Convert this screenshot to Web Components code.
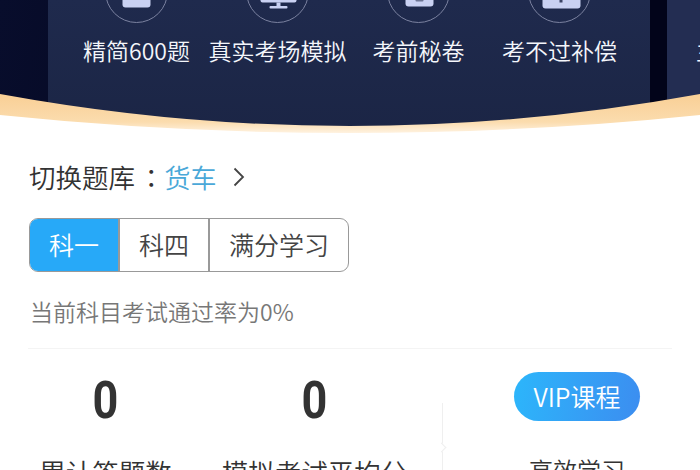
<!DOCTYPE html>
<html lang="zh">
<head>
<meta charset="UTF-8">
<title>VIP</title>
<style>
    html, body { margin: 0; padding: 0; background: #fff; }
    body { width: 700px; height: 470px; overflow: hidden; font-family: "Noto Sans CJK SC", "Noto Sans", sans-serif; font-weight: 350; }
    .perk-icon { display: block; }
</style>
<script>
    const define = (tag, html) => customElements.define(tag, class extends HTMLElement {
        constructor() {
            super();
            this.attachShadow({ mode: 'open' }).innerHTML = html;
        }
    });

    define('vip-banner', `
        <style>
            :host { display: block; position: relative; height: 134px; background: linear-gradient(100deg, #080d2c, #02041a 50%); overflow: hidden; }
            .card { position: absolute; top: 0; left: 48px; width: 602px; height: 134px; background: linear-gradient(#1f2a4d, #1b2545); }
            .next { position: absolute; top: 0; left: 667px; width: 40px; height: 134px; background: #232d52; overflow: hidden; }
            .next span { position: absolute; left: 29px; top: 35px; color: #f4f6fb; font-size: 23px; line-height: 30px; }
            .row { display: flex; padding-left: 18px; }
            svg { position: absolute; left: 0; top: 0; }
        </style>
        <div class="card"><div class="row"><slot></slot></div></div>
        <div class="next"><span>主</span></div>
        <svg width="700" height="134" viewBox="0 0 700 134">
            <defs>
                <linearGradient id="band" x1="0" y1="0" x2="0" y2="1">
                    <stop offset="0" stop-color="#f9cf95"/>
                    <stop offset="0.7" stop-color="#fbdcae"/>
                    <stop offset="1" stop-color="#fff4e4"/>
                </linearGradient>
            </defs>
            <path d="M0 94 Q350 158 700 94 V134 H0Z" fill="url(#band)"/>
            <path d="M0 115 Q350 151 700 115 V134 H0Z" fill="#fff"/>
        </svg>
    `);

    define('vip-perk', `
        <style>
            :host { display: flex; flex-direction: column; align-items: center; width: 141px; height: 70px; color: #f4f6fb; font-size: 23px; }
            .ring { width: 63px; height: 63px; margin-top: -40px; border: 1.5px solid #7b82a0; border-radius: 50%; flex: none; box-sizing: border-box; display: flex; align-items: center; justify-content: center; }
            .label { margin-top: 12px; line-height: 30px; white-space: nowrap; }
        </style>
        <div class="ring"><slot name="icon"></slot></div>
        <div class="label"><slot></slot></div>
    `);

    define('bank-switch', `
        <style>
            :host { display: flex; align-items: center; height: 34px; font-size: 26.5px; color: #333; }
            span, b { margin-top: -4px; }
            .colon { font-family: "Noto Sans CJK TC", sans-serif; margin-left: 3px; margin-right: 0; }
            b { font-weight: inherit; color: #4aa8d8; font-size: 26px; }
            svg { margin-left: 16px; margin-top: -2px; }
        </style>
        <span style="margin-left:-1px">切换题库</span><span class="colon" lang="zh-Hant">：</span><b><slot></slot></b>
        <svg width="12" height="20" viewBox="0 0 12 20"><path d="M1.5 1.5l8.5 8.5-8.5 8.5" fill="none" stroke="#444" stroke-width="1.8"/></svg>
    `);

    define('subject-tabs', `
        <style>
            :host { display: inline-flex; height: 54px; box-sizing: border-box; border: 1px solid #999; border-radius: 9px; overflow: hidden; margin-left: -1px; }
        </style>
        <slot></slot>
    `);

    define('subject-tab', `
        <style>
            :host { display: flex; align-items: center; padding: 0 19px 3px; font-size: 25px; color: #444; border-left: 2px solid #999; }
            :host(:first-child) { border-left: 0; background: #27a9f8; color: #fff; }
            :host(:last-child) { padding: 0 19px 3px 19px; }
        </style>
        <slot></slot>
    `);

    define('stat-item', `
        <style>
            :host { display: flex; flex-direction: column; align-items: center; width: 209px; color: #333; position: relative; left: 1px; }
            .num { font: 700 45px/60px "Roboto", sans-serif; margin-top: 22px; transform: scaleY(1.14); }
            .cap { font-size: 26.5px; line-height: 36px; margin-top: 23px; white-space: nowrap; }
        </style>
        <div class="num"><slot name="num"></slot></div>
        <div class="cap"><slot></slot></div>
    `);

    define('vip-course', `
        <style>
            :host { display: flex; flex-direction: column; align-items: center; width: 126px; color: #333; }
            .pill { width: 126px; height: 49px; margin-top: 23px; border-radius: 25px; background: linear-gradient(100deg, #2cb6fb, #3c8df0); color: #fff; font-size: 25px; padding-bottom: 2px; box-sizing: border-box; display: flex; align-items: center; justify-content: center; }
            .cap { font-size: 24px; line-height: 36px; margin-top: 31px; white-space: nowrap; }
        </style>
        <div class="pill">VIP课程</div>
        <div class="cap"><slot></slot></div>
    `);

    define('stats-row', `
        <style>
            :host { display: flex; position: relative; height: 140px; overflow: hidden; }
            .left { display: flex; width: 442px; flex: none; }
            .sep { width: 1px; height: 90px; margin-top: 54px; background: #efefef; margin-right: 71px; flex: none; }
            .dent { position: absolute; left: 438px; top: 95px; width: 6px; height: 6px; border: solid #efefef; border-width: 1px 1px 0 0; transform: rotate(45deg); background: #fff; }
        </style>
        <div class="left"><slot name="stats"></slot></div>
        <div class="sep"></div>
        <slot name="course"></slot>
        <i class="dent"></i>
    `);
</script>
</head>
<body>
    <vip-banner>
        <vip-perk><svg slot="icon" class="perk-icon" width="60" height="60" viewBox="1.5 1.5 60 60"><rect x="17" y="20" width="28" height="27" rx="3" fill="#c9d1f2"/></svg>精简600题</vip-perk>
        <vip-perk><svg slot="icon" class="perk-icon" width="60" height="60" viewBox="1.5 1.5 60 60"><rect x="14" y="15" width="36" height="27" rx="2" fill="#c9d1f2"/><path d="M30 42h4v4h-4z" fill="#c9d1f2"/><rect x="23" y="45.5" width="18" height="2.5" rx="1" fill="#c9d1f2"/></svg>真实考场模拟</vip-perk>
        <vip-perk><svg slot="icon" class="perk-icon" width="60" height="60" viewBox="1.5 1.5 60 60"><rect x="18" y="20" width="28" height="26" rx="3" fill="#c9d1f2"/><rect x="28" y="38" width="8" height="3" rx="1" fill="#6d7594"/></svg>考前秘卷</vip-perk>
        <vip-perk><svg slot="icon" class="perk-icon" width="60" height="60" viewBox="1.5 1.5 60 60"><rect x="14" y="20" width="38" height="28" rx="3" fill="#c9d1f2"/><rect x="31" y="38" width="3" height="4" fill="#3a4364"/></svg>考不过补偿</vip-perk>
    </vip-banner>
    <div style="padding: 27px 30px 0 30px;">
        <bank-switch>货车</bank-switch>
        <div style="margin-top: 23px; height: 54px;">
            <subject-tabs>
                <subject-tab>科一</subject-tab>
                <subject-tab>科四</subject-tab>
                <subject-tab>满分学习</subject-tab>
            </subject-tabs>
        </div>
        <div style="margin-top: 23px; margin-bottom: 21px; font-size: 23px; line-height: 32px; color: #777;">当前科目考试通过率为0%</div>
        <div style="border-top: 1px solid #f4f4f4; width: 644px; margin-left: -2px;"></div>
        <stats-row style="margin-left:-30px">
            <stat-item slot="stats"><span slot="num">0</span>累计答题数</stat-item>
            <stat-item slot="stats"><span slot="num">0</span>模拟考试平均分</stat-item>
            <vip-course slot="course">高效学习</vip-course>
        </stats-row>
    </div>
</body>
</html>
